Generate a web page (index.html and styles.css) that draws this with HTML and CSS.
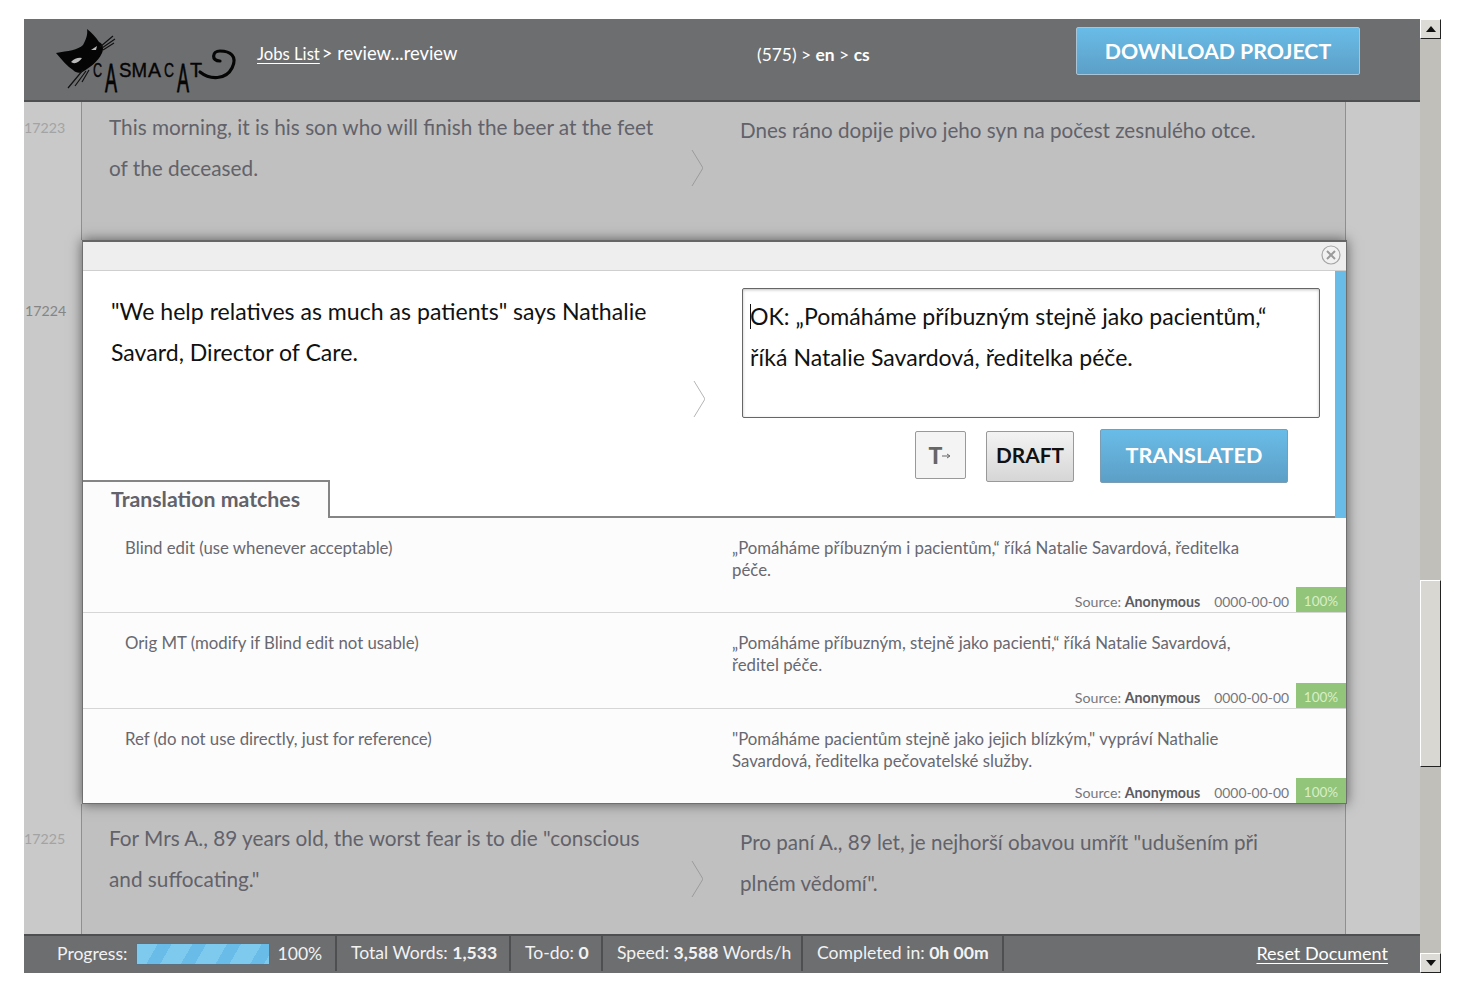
FILE: index.html
```html
<!DOCTYPE html>
<html lang="en">
<head>
<meta charset="utf-8">
<title>CasMaCat review</title>
<link rel="stylesheet" href="styles.css">
</head>
<body>
<div class="app">
  <div class="main">
    <header class="top">
      <svg class="logo" viewBox="0 0 210 80" aria-label="CasMaCat logo">
        <path class="ink" d="M16 33C28 31 38 30 43 25C46 20 48 14 47 9C52 13 56 17 59 22C63 24 64 28 62 33C58 42 50 47 44 51C40 54 36 53 33 50C27 46 22 40 16 33Z"/>
        <path class="eye" d="M31 42Q36 37 42 38Q38 44 33 43ZM51 30L57 26L56 30Z"/>
        <path class="wh" d="M60 27L73 16M62 28L75 19M63 30L74 23M43 50L28 68M46 51L35 66M49 50L42 62"/>
        <path class="tail" d="M160 52C170 60 186 60 192 48C198 36 190 31 180 31C172 31 171 41 180 41"/>
        <text class="lt" transform="translate(53 57) scale(.6 1)">C</text>
        <text class="lt" transform="translate(65 72) scale(.86 1.9)">A</text>
        <text class="lt" transform="translate(79 57) scale(.89 1)">SM</text>
        <text class="lt" transform="translate(108 57) scale(.93 1)">A</text>
        <text class="lt" transform="translate(124 57) scale(.66 1)">C</text>
        <text class="lt" transform="translate(137 72) scale(.86 1.9)">A</text>
        <text class="lt" transform="translate(150 57) scale(.94 1)">T</text>
      </svg>
      <nav class="crumbs"><a class="link" href="#">Jobs List</a><span class="crumb-rest">&gt; review...review</span></nav>
      <div class="job">(575) &gt; <b>en</b> &gt; <b>cs</b></div>
      <a class="download" href="#">DOWNLOAD PROJECT</a>
    </header>

    <div class="rows">
      <section class="row row-first">
        <div class="num">17223</div>
        <div class="cell">
          <p class="src">This morning, it is his son who will finish the beer at the feet<br>of the deceased.</p>
          <svg class="chev" viewBox="0 0 12 36"><path d="M1 0L12 18L1 36"/></svg>
          <p class="tgt">Dnes ráno dopije pivo jeho syn na počest zesnulého otce.</p>
        </div>
        <div class="side"></div>
      </section>

      <section class="row row-open">
        <div class="num num-open">17224</div>
        <div class="modal">
          <div class="modal-bar">
            <svg class="close" viewBox="0 0 20 20"><circle cx="10" cy="10" r="9"/><path d="M6 6L14 14M14 6L6 14"/></svg>
          </div>
          <div class="modal-body">
            <div class="editor">
              <div class="edit-area">
                <p class="src-open">"We help relatives as much as patients" says Nathalie<br>Savard, Director of Care.</p>
                <svg class="chev chev-open" viewBox="0 0 12 36"><path d="M1 0L12 18L1 36"/></svg>
                <div class="edit-right">
                  <div class="textbox"><span class="caret"></span>OK: „Pomáháme příbuzným stejně jako pacientům,“<br>říká Natalie Savardová, ředitelka péče.</div>
                  <div class="actions">
                    <button class="btn btn-copy"><span class="t-glyph">T</span><svg class="t-arrow" viewBox="0 0 10 6"><path d="M0 3H7M5 1L8 3L5 5"/></svg></button>
                    <button class="btn btn-draft">DRAFT</button>
                    <button class="btn btn-translated">TRANSLATED</button>
                  </div>
                </div>
              </div>
              <div class="tabs"><div class="tab">Translation matches</div></div>
            </div>
            <div class="strip"></div>
          </div>
          <div class="matches">
            <article class="match">
              <div class="m-text"><div>Blind edit (use whenever acceptable)</div><div>„Pomáháme příbuzným i pacientům,“ říká Natalie Savardová, ředitelka<br>péče.</div></div>
              <div class="m-foot"><span>Source: <b>Anonymous</b></span><span class="date">0000-00-00</span><span class="pct">100%</span></div>
            </article>
            <article class="match">
              <div class="m-text"><div>Orig MT (modify if Blind edit not usable)</div><div>„Pomáháme příbuzným, stejně jako pacienti,“ říká Natalie Savardová,<br>ředitel péče.</div></div>
              <div class="m-foot"><span>Source: <b>Anonymous</b></span><span class="date">0000-00-00</span><span class="pct">100%</span></div>
            </article>
            <article class="match">
              <div class="m-text"><div>Ref (do not use directly, just for reference)</div><div>"Pomáháme pacientům stejně jako jejich blízkým," vypráví Nathalie<br>Savardová, ředitelka pečovatelské služby.</div></div>
              <div class="m-foot"><span>Source: <b>Anonymous</b></span><span class="date">0000-00-00</span><span class="pct">100%</span></div>
            </article>
          </div>
        </div>
      </section>

      <section class="row row-last">
        <div class="num">17225</div>
        <div class="cell">
          <p class="src">For Mrs A., 89 years old, the worst fear is to die "conscious<br>and suffocating."</p>
          <svg class="chev" viewBox="0 0 12 36"><path d="M1 0L12 18L1 36"/></svg>
          <p class="tgt">Pro paní A., 89 let, je nejhorší obavou umřít "udušením při<br>plném vědomí".</p>
        </div>
        <div class="side"></div>
      </section>
    </div>

    <footer class="status">
      <div class="stat stat-progress"><span>Progress:</span><span class="bar"></span><span>100%</span></div>
      <div class="stat stat-total">Total Words: <b>1,533</b></div>
      <div class="stat stat-todo">To-do: <b>0</b></div>
      <div class="stat stat-speed">Speed: <b>3,588</b> Words/h</div>
      <div class="stat stat-done">Completed in: <b>0h 00m</b></div>
      <a class="link reset" href="#">Reset Document</a>
    </footer>
  </div>

  <div class="scrollbar">
    <div class="sb-btn"><span class="tri-up"></span></div>
    <div class="sb-gap-a"></div>
    <div class="sb-thumb"></div>
    <div class="sb-gap-b"></div>
    <div class="sb-btn"><span class="tri-down"></span></div>
  </div>
</div>
</body>
</html>
```
FILE: styles.css
```css
* { box-sizing: border-box; }
html, body { height: 100%; }
body {
  margin: 0;
  padding: 19px 0 0 24px;
  background: #fff;
  font-family: Lato, "Liberation Sans", sans-serif;
  overflow: hidden;
}
p { margin: 0; }
.app { display: flex; width: 1417px; height: 954px; }
.main { width: 1396px; display: flex; flex-direction: column; }

/* header */
.top {
  height: 83px;
  flex: none;
  background: #6d6e70;
  border-bottom: 2px solid #4e4f50;
  display: flex;
  align-items: flex-start;
  color: #fff;
  font-size: 17.4px;
}
.logo { width: 210px; height: 80px; margin: 1px 0 0 16px; flex: none; }
.ink { fill: #050505; }
.eye { fill: #b9b9b9; }
.wh { fill: none; stroke: #111; stroke-width: 1.2; }
.tail { fill: none; stroke: #050505; stroke-width: 3.2; stroke-linecap: round; }
.lt { font-family: "Liberation Sans", sans-serif; font-size: 21px; fill: #050505; stroke: #050505; stroke-width: .4; }
.crumbs { margin: 23px 0 0 7px; width: 500px; flex: none; display: flex; gap: 2px; font-size: 16.7px; align-items: baseline; }
.crumb-rest { font-size: 18.4px; }
.link { color: #fff; text-decoration: underline; text-underline-offset: 3px; }
.job { margin-top: 25px; width: 319px; flex: none; }
.job b { font-weight: 700; }
.download {
  margin-top: 8px;
  width: 284px;
  height: 48px;
  flex: none;
  border: 1px solid #a9c4d4;
  border-radius: 2px;
  background: linear-gradient(#69bce8, #5c9fc6);
  color: #fff;
  font-size: 21.3px;
  font-weight: 700;
  line-height: 46px;
  text-align: center;
  text-decoration: none;
}

/* rows */
.rows { flex: 1; min-height: 0; display: flex; flex-direction: column; overflow: hidden; }
.row { display: grid; grid-template-columns: 57px 1265px 74px; background: #c9c9c9; }
.row-first { height: 138px; flex: none; }
.row-last { flex: 1; min-height: 0; }
.row-open { grid-template-columns: 58px 1265px 73px; height: 564px; flex: none; position: relative; z-index: 1; }
.num { font-size: 14.2px; color: #a3a3a3; padding-top: 16px; line-height: 20px; }
.row-last .num { padding-top: 25px; }
.num-open { color: #858585; padding: 61px 0 0 1px; }
.cell {
  background: #c0c0c0;
  border-left: 1px solid #8f8f8f;
  border-right: 1px solid #8f8f8f;
  display: grid;
  grid-template-columns: 583px 49px 1fr;
  padding: 5px 0 0 27px;
  font-size: 20.75px;
  line-height: 41px;
  color: #62626a;
}
.row-last .cell { padding-top: 14px; }
.tgt { margin: 3px 0 0 -1px; font-size: 20.6px; }
.row-last .tgt { margin-top: 4px; }
.chev { width: 12px; height: 36px; margin-top: 43px; margin-left: -1px; }
.chev path { fill: none; stroke: #9b9b9b; stroke-width: 1; }
.side { background: #c9c9c9; }

/* modal */
.modal {
  display: flex;
  flex-direction: column;
  background: #fff;
  border-top: 2px solid #666;
  border-right: 1px solid #6f6f6f;
  border-bottom: 1px solid #6f6f6f;
  border-left: 1px solid #6f6f6f;
  box-shadow: 0 0 12px rgba(0, 0, 0, .55);
}
.modal-bar {
  height: 29px;
  flex: none;
  background: #eeeeef;
  border-bottom: 1px solid #cfcfcf;
  display: flex;
  justify-content: flex-end;
  align-items: center;
  padding: 0 5px 2px 0;
}
.close { width: 20px; height: 20px; }
.close circle { fill: #f1f1f1; stroke: #a6a6a6; stroke-width: 1.2; }
.close path { stroke: #9a9a9a; stroke-width: 2; }
.modal-body { display: grid; grid-template-columns: 1252px 11px; height: 247px; flex: none; }
.editor { display: flex; flex-direction: column; min-height: 0; }
.edit-area {
  height: 209px;
  flex: none;
  display: grid;
  grid-template-columns: 582px 49px 1fr;
  padding: 20px 0 0 28px;
  color: #111;
  font-size: 23.1px;
  line-height: 41px;
}
.chev-open { margin: 90px 0 0 0; }
.chev-open path { stroke: #b5b5b5; }
.textbox {
  position: relative;
  width: 578px;
  height: 130px;
  margin-top: -3px;
  border: 1px solid #666;
  border-radius: 2px;
  box-shadow: inset 0 1px 3px rgba(0, 0, 0, .25);
  padding: 7px 0 0 7px;
  white-space: nowrap;
}
.caret { position: absolute; left: 7px; top: 15px; width: 1px; height: 25px; background: #111; }
.actions { display: flex; gap: 20px; align-items: center; padding: 11px 0 0 173px; }
.btn { font-family: inherit; padding: 0; cursor: pointer; }
.btn-copy {
  width: 51px;
  height: 48px;
  margin-bottom: 3px;
  background: #f4f4f4;
  border: 1px solid #999;
  border-radius: 2px;
  color: #666;
  display: flex;
  align-items: center;
  justify-content: center;
}
.t-glyph { font-size: 23px; font-weight: 900; }
.t-arrow { width: 10px; height: 6px; margin-top: 3px; }
.t-arrow path { fill: none; stroke: #666; stroke-width: 1; }
.btn-draft {
  width: 88px;
  height: 51px;
  padding-bottom: 3px;
  border: 1px solid #999;
  border-radius: 2px;
  background: linear-gradient(#f3f3f3, #d6d6d6);
  color: #111;
  font-size: 20.8px;
  font-weight: 700;
}
.btn-translated {
  width: 188px;
  height: 54px;
  margin-left: 6px;
  padding-bottom: 2px;
  border: 1px solid #7a9db3;
  border-radius: 2px;
  background: linear-gradient(#69bce8, #5c9fc6);
  color: #fff;
  font-size: 21.6px;
  font-weight: 700;
}
.tabs { height: 38px; flex: none; border-bottom: 2px solid #858585; }
.tab {
  width: 247px;
  height: 38px;
  background: #fcfcfc;
  border-top: 2px solid #858585;
  border-right: 2px solid #858585;
  padding-left: 28px;
  color: #62626a;
  font-size: 21.3px;
  font-weight: 700;
  line-height: 35px;
}
.strip { background: #69bce8; }

/* matches */
.matches { flex: 1; min-height: 0; display: flex; flex-direction: column; background: #fcfcfc; }
.match { flex: 1; display: flex; flex-direction: column; justify-content: space-between; border-bottom: 1px solid #d6d6d6; }
.match:last-child { border-bottom: 0; }
.m-text {
  display: grid;
  grid-template-columns: 607px 1fr;
  padding: 19px 0 0 42px;
  color: #686870;
  font-size: 16.8px;
  line-height: 22px;
}
.m-foot {
  display: flex;
  justify-content: flex-end;
  align-items: flex-end;
  gap: 14px;
  color: #76767c;
  font-size: 14.2px;
  line-height: 20px;
}
.m-foot b { color: #5c5c62; }
.date { margin-right: -7px; font-size: 13.9px; }
.pct {
  width: 50px;
  height: 25px;
  background: #92c47a;
  color: #d8efc8;
  text-align: center;
  font-size: 13.5px;
  line-height: 28px;
}

/* status */
.status {
  height: 39px;
  flex: none;
  background: #6d6e70;
  border-top: 2px solid #4e4f50;
  color: #f2f2f2;
  font-size: 17.6px;
  display: flex;
  align-items: stretch;
}
.stat {
  line-height: 33px;
  white-space: nowrap;
  border-right: 2px solid #4e4f50;
  margin-bottom: 2px;
}
.stat b { font-weight: 700; }
.stat-progress { width: 313px; padding-left: 33px; display: flex; align-items: center; gap: 8px; }
.stat-total { width: 174px; padding-left: 14px; }
.stat-todo { width: 92px; padding-left: 14px; }
.stat-speed { width: 200px; padding-left: 14px; }
.stat-done { width: 201px; padding-left: 14px; }
.bar {
  width: 134px;
  height: 22px;
  margin: 0;
  border: 1px solid #5f6f7c;
  background: repeating-linear-gradient(120deg, #7dcaee 0 18px, #69bce8 18px 30px);
}
.reset { margin: 0 32px 4px auto; align-self: center; font-size: 18px; }

/* scrollbar */
.scrollbar { width: 21px; display: flex; flex-direction: column; background: #c0bfb9; }
.sb-btn {
  height: 20px;
  flex: none;
  background: #dcdbd5;
  border: 1px solid #fff;
  border-right-color: #222;
  border-bottom-color: #222;
  display: flex;
  align-items: center;
  justify-content: center;
}
.sb-gap-a { height: 541px; flex: none; }
.sb-thumb {
  height: 187px;
  flex: none;
  background: #d8d7d1;
  border: 1px solid #fff;
  border-right-color: #222;
  border-bottom-color: #222;
}
.sb-gap-b { flex: 1; }
.tri-up, .tri-down { width: 0; height: 0; border-left: 5px solid transparent; border-right: 5px solid transparent; }
.tri-up { border-bottom: 6px solid #111; }
.tri-down { border-top: 6px solid #111; }
```
